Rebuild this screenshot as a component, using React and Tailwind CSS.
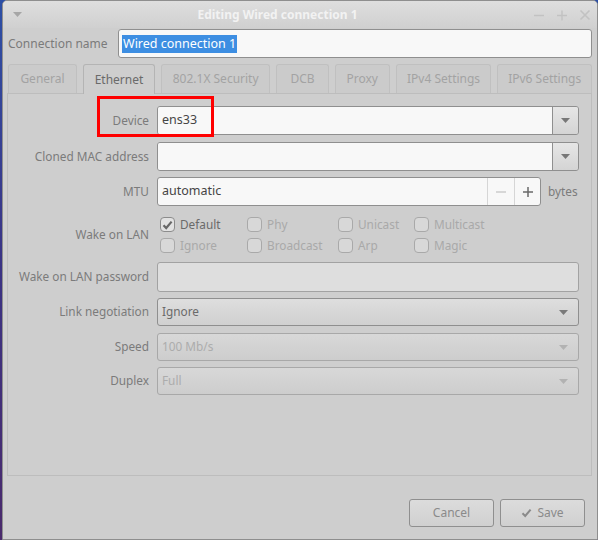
import React from 'react'

const font = { fontFamily: '"Noto Sans", "Open Sans", sans-serif' }

const Tri = ({ color = '#777777' }) => (
  <svg width="9" height="5" viewBox="0 0 9 5">
    <path d="M0 0 H9 L4.5 5 Z" fill={color} />
  </svg>
)

const Label = ({ children }) => (
  <div className="w-[142px] shrink-0 text-right text-[#7b7b7b] pr-[1px] whitespace-nowrap">{children}</div>
)

const Row = ({ label, children, className = '' }) => (
  <div className={`flex items-center gap-[7px] ${className}`}>
    <Label>{label}</Label>
    {children}
  </div>
)

const ComboEntry = ({ value }) => (
  <div className="flex-1 h-[29px] flex border border-[#8f8f8f] rounded-[3px] overflow-hidden">
    <div className="flex-1 bg-[#f8f8f8] flex items-center pl-[4px] text-[#454545] text-[12.5px]">{value}</div>
    <div className="w-[26px] border-l border-[#8f8f8f] bg-gradient-to-b from-[#e6e6e6] to-[#d4d4d4] flex items-center justify-center">
      <Tri />
    </div>
  </div>
)

const Combo = ({ value, disabled }) => (
  <div
    className={`flex-1 h-[28px] flex items-center justify-between pl-[4px] pr-[10px] rounded-[3px] border bg-gradient-to-b ${
      disabled
        ? 'border-[#a8a8a8] from-[#d8d8d8] to-[#cdcdcd] text-[#acacac]'
        : 'border-[#8f8f8f] from-[#dedede] to-[#d0d0d0] text-[#6a6a6a]'
    }`}
  >
    <span>{value}</span>
    <Tri color={disabled ? '#b2b2b2' : '#7a7a7a'} />
  </div>
)

const Check = ({ label, checked, className = '' }) => (
  <div className={`flex items-center gap-[5px] h-[15px] ${className}`}>
    <div
      className={`w-[15px] h-[15px] rounded-[4px] border flex items-center justify-center ${
        checked ? 'border-[#8c8c8c] bg-[#e2e2e2]' : 'border-[#a9a9a9] bg-[#d8d8d8]'
      }`}
    >
      {checked && (
        <svg width="11" height="10" viewBox="0 0 11 10">
          <path d="M1.5 5.2 L4.2 8 L9.6 1.6" stroke="#686868" strokeWidth="2.2" fill="none" />
        </svg>
      )}
    </div>
    <span className={`leading-[15px] ${checked ? 'text-[#6a6a6a]' : 'text-[#a9a9a9]'}`}>{label}</span>
  </div>
)

const tabs = [
  ['General', 'w-[70px]'],
  ['Ethernet', 'w-[73px]'],
  ['802.1X Security', 'w-[111px]'],
  ['DCB', 'w-[53px]'],
  ['Proxy', 'w-[56px]'],
  ['IPv4 Settings', 'w-[97px]'],
  ['IPv6 Settings', 'w-[96px]'],
]

export default function App() {
  return (
    <div
      className="w-[598px] h-[540px] flex bg-gradient-to-b from-[#2c4fa5] via-[#3b3384] to-[#4a2a6c] text-[11.8px]"
      style={font}
    >
      <div className="ml-[2px] flex-1 flex flex-col bg-[#cecece] border border-[#8e8e8e] rounded-t-[5px] overflow-hidden">
        {/* Title bar */}
        <div className="h-[27px] shrink-0 flex items-center bg-gradient-to-b from-[#dedede] to-[#d0d0d0]">
          <div className="w-[27px] flex justify-center pl-[2px]">
            <Tri color="#a6a6a6" />
          </div>
          <div className="flex-1 text-center font-bold text-[#f2f2f2] text-[12px]">Editing Wired connection 1</div>
          <div className="w-[72px] flex items-center gap-[11px] pl-[8px]">
            <svg width="12" height="12" viewBox="0 0 12 12"><path d="M1 6.5 H11" stroke="#c2c2c2" strokeWidth="1.4" /></svg>
            <svg width="12" height="12" viewBox="0 0 12 12"><path d="M1 6.5 H11 M6 1.5 V11.5" stroke="#c2c2c2" strokeWidth="1.4" /></svg>
            <svg width="12" height="12" viewBox="0 0 12 12"><path d="M1.5 1.5 L10.5 10.5 M10.5 1.5 L1.5 10.5" stroke="#c2c2c2" strokeWidth="1.6" /></svg>
          </div>
        </div>

        <div className="flex-1 flex flex-col pl-[4px] pr-[5px]">
          {/* Connection name */}
          <div className="mt-[1px] flex items-center">
            <div className="w-[111px] pl-[1px] text-[#7b7b7b] text-[12px]">Connection name</div>
            <div className="flex-1 h-[29px] bg-[#f8f8f8] border border-[#8f8f8f] rounded-[3px] flex items-center pl-[3px]">
              <span className="bg-[#3d8ee2] text-white px-[1px] leading-[18px] text-[12.5px]">Wired connection 1</span>
            </div>
          </div>

          {/* Tabs */}
          <div className="mt-[6px] h-[29px] flex gap-[6px] pl-[1px] text-[12px]">
            {tabs.map(([t, w]) => {
              const active = t === 'Ethernet'
              return (
                <div
                  key={t}
                  className={`${w} h-[29px] rounded-t-[3px] border border-b-0 flex items-center justify-center ${
                    active
                      ? 'border-[#b4b4b4] bg-[#cecece] text-[#6a6a6a] relative z-10 h-[30px]'
                      : 'border-[#c0c0c0] bg-[#cbcbcb] text-[#a3a3a3]'
                  }`}
                >
                  {t}
                </div>
              )
            })}
          </div>

          {/* Panel */}
          <div className="h-[383px] border border-[#bdbdbd] pt-[12px] pr-[12px] flex flex-col">
            <Row label="Device" className="relative">
              <div className="absolute left-[89px] top-[-10px] w-[117px] h-[41px] border-[3px] border-[#ff0000]" />
              <ComboEntry value="ens33" />
            </Row>
            <Row label="Cloned MAC address" className="mt-[7px]">
              <ComboEntry value="" />
            </Row>
            <Row label="MTU" className="mt-[6px]">
              <div className="w-[384px] h-[29px] flex border border-[#8f8f8f] rounded-[3px] overflow-hidden bg-[#f8f8f8]">
                <div className="flex-1 flex items-center pl-[4px] text-[#454545] text-[12.5px]">automatic</div>
                <div className="w-[27px] border-l border-[#d6d6d6] flex items-center justify-center">
                  <svg width="12" height="12" viewBox="0 0 12 12"><path d="M1 6 H11" stroke="#cdcdcd" strokeWidth="1.5" /></svg>
                </div>
                <div className="w-[26px] border-l border-[#d6d6d6] flex items-center justify-center">
                  <svg width="12" height="12" viewBox="0 0 12 12"><path d="M1 6 H11 M6 1 V11" stroke="#6a6a6a" strokeWidth="1.5" /></svg>
                </div>
              </div>
              <span className="text-[#7b7b7b]">bytes</span>
            </Row>
            <div className="mt-[11px] flex items-center gap-[7px]">
              <Label>Wake on LAN</Label>
              <div className="grid grid-cols-[87px_91px_76px_80px] gap-y-[6px] pl-[3px]">
                <Check label="Default" checked />
                <Check label="Phy" />
                <Check label="Unicast" />
                <Check label="Multicast" />
                <Check label="Ignore" />
                <Check label="Broadcast" />
                <Check label="Arp" />
                <Check label="Magic" />
              </div>
            </div>
            <Row label="Wake on LAN password" className="mt-[9px]">
              <div className="flex-1 h-[30px] bg-[#dedede] border border-[#a2a2a2] rounded-[3px]" />
            </Row>
            <Row label="Link negotiation" className="mt-[6px]">
              <Combo value="Ignore" />
            </Row>
            <Row label="Speed" className="mt-[7px]">
              <Combo value="100 Mb/s" disabled />
            </Row>
            <Row label="Duplex" className="mt-[6px]">
              <Combo value="Full" disabled />
            </Row>
          </div>

          {/* Buttons */}
          <div className="mt-[23px] flex justify-end gap-[6px] pr-[7px] text-[12px]">
            <button className="w-[85px] h-[28px] border border-[#8f8f8f] rounded-[3px] bg-gradient-to-b from-[#dcdcdc] to-[#d0d0d0] text-[#8a8a8a]">
              Cancel
            </button>
            <button className="w-[85px] h-[28px] border border-[#8f8f8f] rounded-[3px] bg-gradient-to-b from-[#dcdcdc] to-[#d0d0d0] text-[#8a8a8a] flex items-center justify-center gap-[5px]">
              <svg width="11" height="10" viewBox="0 0 11 10">
                <path d="M1.5 5.2 L4.2 8 L9.6 1.6" stroke="#8a8a8a" strokeWidth="2" fill="none" />
              </svg>
              Save
            </button>
          </div>
        </div>
      </div>
    </div>
  )
}
